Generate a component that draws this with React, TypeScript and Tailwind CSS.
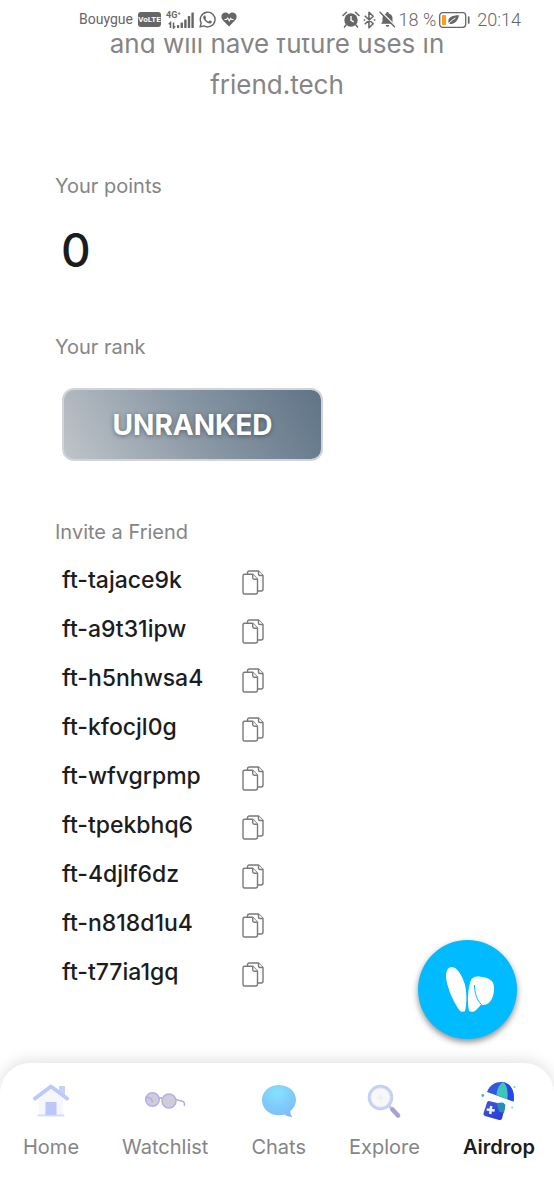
import type { ReactNode } from "react";

const codes = [
  "ft-tajace9k",
  "ft-a9t31ipw",
  "ft-h5nhwsa4",
  "ft-kfocjl0g",
  "ft-wfvgrpmp",
  "ft-tpekbhq6",
  "ft-4djlf6dz",
  "ft-n818d1u4",
  "ft-t77ia1gq",
];

function SignalIcon() {
  return (
    <svg width="28" height="18" viewBox="0 0 28 18" fill="#666" aria-hidden="true">
      <path d="M4.5 17V11.5L2.8 13.2M7.5 11.5V17L9.2 15.3" fill="none" stroke="#666" strokeWidth="1.5" />
      <rect x="11" y="14" width="2.200" height="3" rx="0.6" />
      <rect x="14.6" y="11.500" width="2.400" height="5.500" rx="0.6" />
      <rect x="18.2" y="8.500" width="2.400" height="8.500" rx="0.6" />
      <rect x="21.8" y="5" width="2.400" height="12" rx="0.6" />
      <rect x="25.4" y="1.5" width="2.400" height="15.5" rx="0.6" />
    </svg>
  );
}

function WhatsappIcon() {
  return (
    <svg width="17" height="17" viewBox="0 0 24 24" fill="#666" aria-hidden="true">
      <path d="M17.472 14.382c-.297-.149-1.758-.867-2.03-.967-.273-.099-.471-.148-.67.15-.197.297-.767.966-.94 1.164-.173.199-.347.223-.644.075-.297-.15-1.255-.463-2.39-1.475-.883-.788-1.48-1.761-1.653-2.059-.173-.297-.018-.458.13-.606.134-.133.298-.347.446-.52.149-.174.198-.298.298-.497.099-.198.05-.371-.025-.52-.075-.149-.669-1.612-.916-2.207-.242-.579-.487-.5-.669-.51-.173-.008-.371-.01-.57-.01-.198 0-.52.074-.792.372-.272.297-1.04 1.016-1.04 2.479 0 1.462 1.065 2.875 1.213 3.074.149.198 2.096 3.2 5.077 4.487.709.306 1.262.489 1.694.625.712.227 1.36.195 1.871.118.571-.085 1.758-.719 2.006-1.413.248-.694.248-1.289.173-1.413-.074-.124-.272-.198-.57-.347z" />
      <path d="M1.5 22.5l1.55-5.6A10.4 10.4 0 1 1 7 21z" fill="none" stroke="#666" strokeWidth="2" strokeLinejoin="round" />
    </svg>
  );
}

function HeartIcon() {
  return (
    <svg width="16" height="15" viewBox="0 0 16 15" aria-hidden="true">
      <path d="M8 14.500L1.600 8C-.2 6 .1 3 1.800 1.600 3.600 0 6.400.3 8 2.400 9.600.3 12.400 0 14.200 1.600c1.700 1.400 2 4.400.2 6.400z" fill="#666" />
      <path d="M3.500 7.500h2l1.200-1.500 1.600 2.800 1.400-2.500.8 1.200h2" fill="none" stroke="#fff" strokeWidth="1.100" />
    </svg>
  );
}

function AlarmIcon() {
  return (
    <svg width="18" height="17" viewBox="0 0 18 17" fill="none" aria-hidden="true">
      <circle cx="9" cy="9" r="6.700" fill="#666" />
      <path d="M9 5v4.300l2.800 1.500" stroke="#fff" strokeWidth="1.400" />
      <path d="M1 4.500L4.500 1.200M17 4.500l-3.500-3.300M4 14l-1.500 2M14 14l1.500 2" stroke="#666" strokeWidth="1.500" strokeLinecap="round" />
    </svg>
  );
}

function BluetoothIcon() {
  return (
    <svg width="13" height="18" viewBox="0 0 12 17" fill="none" stroke="#666" strokeWidth="1.500" aria-hidden="true">
      <path d="M1.500 4.500l8 7.500-4 3.800V1.200l4 3.800-8 7.500" strokeLinejoin="round" />
      <path d="M.5 8.500H2M10 8.500h1.500" />
    </svg>
  );
}

function BellOffIcon() {
  return (
    <svg width="17" height="17" viewBox="0 0 17 17" aria-hidden="true">
      <path d="M8.500 1c.8 0 1.300.6 1.300 1.400C12.200 3 13.500 4.800 13.500 7v3.600l1.500 2.200H2l1.500-2.200V7c0-2.200 1.300-4 3.700-4.600C7.200 1.600 7.700 1 8.500 1zM6.800 14h3.400c0 1-.8 1.800-1.700 1.800S6.800 15 6.800 14z" fill="#666" />
      <path d="M2.300.8l14 14" stroke="#fff" strokeWidth="1.300" />
      <path d="M1 1.200l14.500 14.500" stroke="#666" strokeWidth="1.400" strokeLinecap="round" />
    </svg>
  );
}

function BatteryIcon() {
  return (
    <svg width="31" height="16" viewBox="0 0 31 16" fill="none" aria-hidden="true">
      <rect x="0.700" y="0.700" width="26" height="14.600" rx="3" stroke="#666" strokeWidth="1.300" />
      <rect x="3" y="3" width="4" height="10" rx="0.800" fill="#ff9d16" />
      <path d="M29.700 5v6" stroke="#666" strokeWidth="1.700" strokeLinecap="round" />
      <path d="M20 3.200c-5.500.2-9.500 1.200-10.500 4.500-.5 1.600 0 3 .8 4 4.700 1.200 8.700-2.700 9.700-8.500z" fill="#666" />
      <path d="M8.500 13.500c2-3.500 4.500-5.500 8-7.500" stroke="#fff" strokeWidth="1" />
    </svg>
  );
}

function CopyIcon() {
  return (
    <svg width="22" height="26" viewBox="0 0 22 26" fill="#fff" stroke="#7a7a7a" strokeWidth="1.400" strokeLinejoin="round" aria-hidden="true">
      <path d="M5.500 4V3q0-2 2-2h9l4.500 4.500V19q0 2-2 2h-3.500" />
      <path d="M16.500 1v3q0 1.500 1.500 1.500h3" />
      <path d="M2.500 4.200h8.200l4.800 5V22q0 2-2 2h-11q-1.500 0-1.500-2V6.200q0-2 1.500-2z" />
      <path d="M10.700 4.200v3.300q0 1.700 1.700 1.700h3.100" />
    </svg>
  );
}

function HomeIcon() {
  return (
    <svg width="36" height="34" viewBox="0 0 36 34" aria-hidden="true">
      <path d="M26 2h6v12l-6-4z" fill="#c5d1fb" />
      <path d="M6 15L18 5l12 10v16H6z" fill="#f5f6fe" />
      <path d="M5.500 31.500h25" stroke="#d4dcfa" strokeWidth="2" strokeLinecap="round" />
      <path d="M12.500 18h11v13h-11z" fill="#bac7f8" />
      <path d="M2 14.500L18 2.500l16 12" fill="none" stroke="#bccafb" strokeWidth="4" strokeLinecap="round" strokeLinejoin="round" />
    </svg>
  );
}

function GlassesIcon() {
  return (
    <svg width="42" height="34" viewBox="0 0 42 34" fill="none" stroke="#b8aaf0" strokeWidth="1.500" strokeLinecap="round" aria-hidden="true">
      <circle cx="8.500" cy="15.500" r="6.800" fill="#ceced4" />
      <circle cx="25" cy="17" r="7" fill="#ceced4" />
      <path d="M15.300 14.500q1.500-1.500 3 .3M32 15.500l7 2q1.800.8 1.500 4M2.500 13l4 1.500q2 1 1.700 4" />
    </svg>
  );
}

function ChatIcon() {
  return (
    <svg width="36" height="34" viewBox="0 0 36 34" aria-hidden="true">
      <defs>
        <radialGradient id="bubble" cx="0.450" cy="0.250" r="0.850">
          <stop offset="0" stopColor="#85e3ff" />
          <stop offset="0.550" stopColor="#7fcafa" />
          <stop offset="1" stopColor="#83b8f8" />
        </radialGradient>
      </defs>
      <path d="M18 1c9.500 0 17 6.500 17 15 0 4.500-2.300 8.500-5.800 11.200.2 2.300 1 4.300 2 5.800-3.500-.1-6-1-7.700-2.500-1.800.5-3.600.8-5.500.8C8.500 31.300 1 24.700 1 16S8.500 1 18 1z" fill="url(#bubble)" />
    </svg>
  );
}

function SearchIcon() {
  return (
    <svg width="34" height="34" viewBox="0 0 34 34" fill="none" strokeLinecap="round" aria-hidden="true">
      <path d="M22 22l4 4" stroke="#c2caea" strokeWidth="3" />
      <path d="M25.500 25.500l5.500 6" stroke="#a9a0d1" strokeWidth="4.500" />
      <circle cx="13.500" cy="13.500" r="11.300" fill="#f8f8fb" stroke="#c6d1f1" strokeWidth="3" />
      <circle cx="13.500" cy="13.500" r="9.500" stroke="#e2e7f8" strokeWidth="1" />
      <path d="M13.500 9l1.300 3.500 3.700 1.500-3.700 1.300-1.300 3.700-1.300-3.700L8.500 14l3.700-1.500z" fill="#f0eff3" />
    </svg>
  );
}

function AirdropIcon() {
  return (
    <svg width="36" height="40" viewBox="0 0 36 40" aria-hidden="true">
      <defs>
        <linearGradient id="crate" x1="0" y1="0" x2="1" y2="1">
          <stop offset="0" stopColor="#4259d4" />
          <stop offset="1" stopColor="#2637d8" />
        </linearGradient>
      </defs>
      <path d="M6 11C9 3 16 .2 22.500 1.300 30 2.800 34 10 32.500 20.500z" fill="#3158df" />
      <path d="M15.500 14C16 8 18.500 3 22 1.200c4 2.300 5.500 8.500 4.500 17z" fill="#3fc5ba" />
      <path d="M22 1.200c4 2 5.500 8.500 4.500 17l6 2.300C34 10 30 2.800 22 1.200z" fill="#2748e8" />
      <path d="M8 20l14.500 3.500q2 .8 1.500 3l-3 11q-.7 2-2.800 1.500L4 35q-2-.8-1.500-2.800L6 21.500q.6-2 2-1.500z" fill="url(#crate)" />
      <path d="M15.500 22l6.500-.5 2.500 2.500-1.500 8-5-1.500z" fill="#278db9" />
      <path d="M10.200 25l-1 8M5.700 28.500l8 1" stroke="#eef2ff" strokeWidth="2.500" />
      <circle cx="1.800" cy="14.500" r="1.400" fill="#43b8bd" />
      <circle cx="33.500" cy="6" r="1" fill="#75cfd0" />
      <circle cx="31.200" cy="26.500" r="1.100" fill="#82d7d2" />
    </svg>
  );
}

function WingsIcon() {
  return (
    <svg width="50" height="48" viewBox="0 0 50 48" aria-hidden="true">
      <path d="M7 1C2 1 0 7 1.500 14.500 3.500 25 9 37 15 45q1.800 1.300 5 .3C22 37 21.800 27 20 19 17.500 9.500 12 1 7 1z" fill="#fff" />
      <path d="M24 45C22 35 23 21 26 14q2-3.500 6-3.500c7 0 13.500 2 15.800 6 2.200 4.500 1.500 12-1.300 17-2.200 4-6.500 6.700-10.500 5-2 2.500-4.500 5.500-6.500 6.700-2 .9-4 .6-5.500-.2z" fill="#fff" />
      <path d="M29.500 19c0 8 2.500 15.500 7 19.500" fill="none" stroke="#00bbff" strokeWidth="1" />
    </svg>
  );
}

function NavItem({ label, icon, active = false }: { label: string; icon: ReactNode; active?: boolean }) {
  return (
    <a
      href="#"
      aria-current={active ? "page" : undefined}
      className={`flex flex-col items-center gap-3 text-[20px] leading-7 ${active ? "font-semibold text-[#1b1c20]" : "text-[#858585]"}`}
    >
      <span className="flex h-10 items-center">{icon}</span>
      {label}
    </a>
  );
}

export default function App() {
  return (
    <div className="flex min-h-screen flex-col bg-white font-['Inter',sans-serif] text-[#1b1c20]">
      <header className="sticky top-0 z-10 flex h-[38px] items-center justify-between bg-white pt-px pr-[33px] pl-[79px] text-[#666]">
        <div className="flex items-center gap-[5px] font-['Roboto',sans-serif]">
          <span className="text-[14px]">Bouygue</span>
          <span className="flex h-[15px] w-[23px] items-center justify-center rounded-[3px] bg-[#666] text-[8px] leading-none font-bold text-white">
            VoLTE
          </span>
          <span className="relative">
            <SignalIcon />
            <span className="absolute top-0 left-0 text-[9px] leading-[9px] font-bold">4G⁺</span>
          </span>
          <WhatsappIcon />
          <HeartIcon />
        </div>
        <div className="flex items-center gap-[3px] font-['Roboto',sans-serif] text-[18px] font-light">
          <AlarmIcon />
          <BluetoothIcon />
          <BellOffIcon />
          <span className="whitespace-nowrap">18 %</span>
          <BatteryIcon />
          <span className="pl-1">20:14</span>
        </div>
      </header>

      <main className="flex-1 px-[55px]">
        <p className="-mt-[15px] text-center text-[26px] leading-[41px] text-[#858585]">
          and will have future uses in
          <br />
          friend.tech
        </p>

        <section className="pt-[67px]">
          <h2 className="text-[20px] leading-7 text-[#858585]">Your points</h2>
          <p className="pt-5 pl-[6px] text-[46px] leading-[60px] font-medium">0</p>
        </section>

        <section className="pt-[53px]">
          <h2 className="text-[20px] leading-7 text-[#858585]">Your rank</h2>
          <div className="mt-[27px] ml-[7px] flex h-[73px] w-[261px] items-center justify-center rounded-xl border-2 border-[#d1d5da] bg-linear-[60deg] from-[#c0c5ca] via-[#8a98a5] to-[#5e7386] bg-origin-border text-[28px] font-bold text-white text-shadow-[0_1px_5px_rgb(0_0_0/0.4)]">
            UNRANKED
          </div>
        </section>

        <section className="pt-[57px]">
          <h2 className="text-[20px] leading-7 text-[#858585]">Invite a Friend</h2>
          <ul className="pt-[10px] pl-[7px]">
            {codes.map((code) => (
              <li key={code} className="flex h-[49px] items-center">
                <span className="w-[180px] text-[23px] font-medium">{code}</span>
                <button type="button" aria-label={`Copy ${code}`} className="pt-1">
                  <CopyIcon />
                </button>
              </li>
            ))}
          </ul>
        </section>
      </main>

      <button
        type="button"
        aria-label="Open wallet"
        className="fixed right-[37px] bottom-[161px] z-10 flex size-[99px] items-center justify-center rounded-full bg-[#00bbff] pl-1 shadow-[0_3px_6px_rgb(0_0_0/0.45)]"
      >
        <WingsIcon />
      </button>

      <nav className="sticky bottom-0 flex h-[137px] justify-between rounded-t-[30px] bg-white pt-[18px] pr-[19px] pl-[23px] shadow-[0_-2px_16px_rgb(0_0_0/0.13)]">
        <NavItem label="Home" icon={<HomeIcon />} />
        <NavItem label="Watchlist" icon={<GlassesIcon />} />
        <NavItem label="Chats" icon={<ChatIcon />} />
        <NavItem label="Explore" icon={<SearchIcon />} />
        <NavItem label="Airdrop" icon={<AirdropIcon />} active />
      </nav>
    </div>
  );
}
